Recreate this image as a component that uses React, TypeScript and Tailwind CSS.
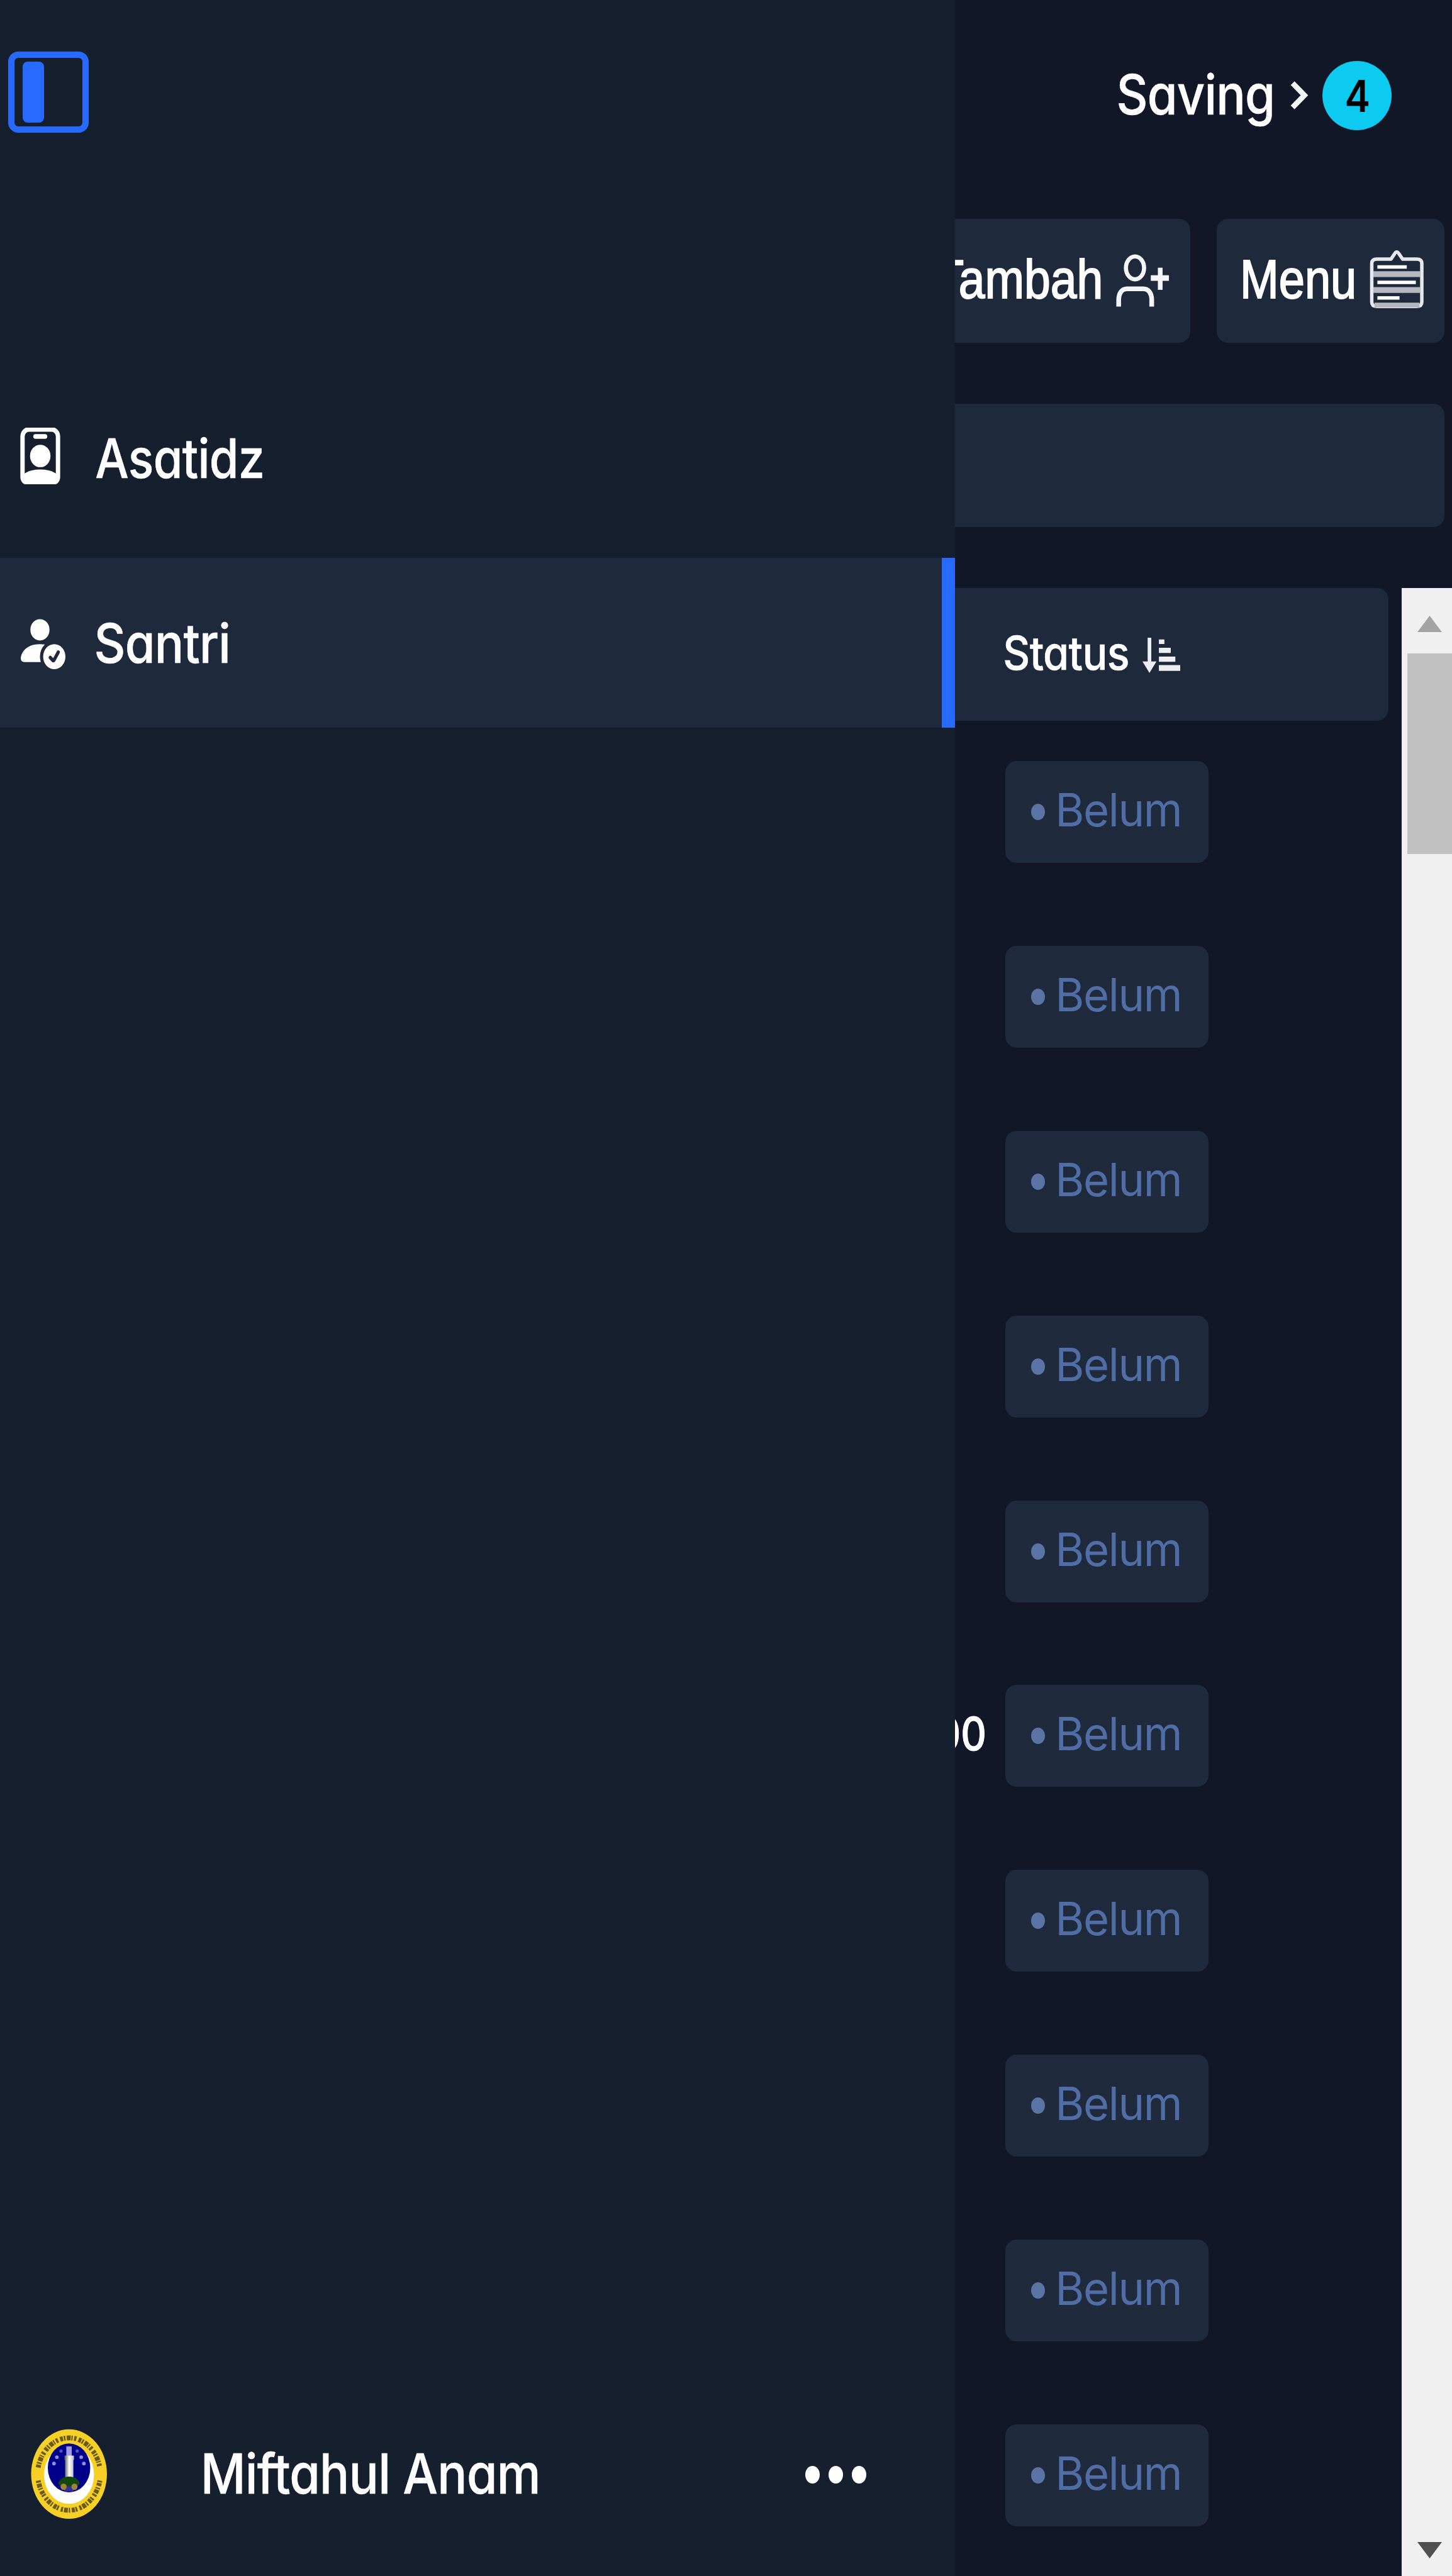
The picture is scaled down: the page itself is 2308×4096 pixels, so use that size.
import { useLayoutEffect, useRef, useState } from "react";
import type { ReactNode } from "react";
import { BsPersonBadge, BsPersonFillCheck } from "react-icons/bs";

type FitTextProps = { children: string; width: number; className?: string };

/* Condenses a single line of text so that its visible ink spans `width` pixels. */
function FitText({ children, width, className = "" }: FitTextProps) {
  const ref = useRef<HTMLSpanElement>(null);
  const [fit, setFit] = useState({ scale: 1, shift: 0 });

  useLayoutEffect(() => {
    const el = ref.current;
    const ctx = document.createElement("canvas").getContext("2d");
    if (!el || !ctx) return;
    const style = getComputedStyle(el);
    const tracking = parseFloat(style.letterSpacing) || 0;
    ctx.font = `${style.fontWeight} ${style.fontSize} ${style.fontFamily}`;
    const m = ctx.measureText(children);
    const left = -m.actualBoundingBoxLeft;
    const right = m.width - m.actualBoundingBoxRight;
    const scale = width / (el.offsetWidth - tracking - left - right);
    setFit({ scale, shift: -left * scale });
  }, [children, width]);

  return (
    <span className="block shrink-0" style={{ width }}>
      <span
        ref={ref}
        className={`inline-block origin-left whitespace-nowrap align-top leading-none ${className}`}
        style={{ transform: `translateX(${fit.shift}px) scaleX(${fit.scale})` }}
      >
        {children}
      </span>
    </span>
  );
}

function ToggleButton() {
  return (
    <button className="ml-[13px] mt-[82px] block h-[129px] w-[128px] rounded-[16px] border-[10.5px] border-[#286aff] pl-[13px]">
      <span className="block h-[97px] w-[34px] rounded-[8px] bg-[#286aff]" />
    </button>
  );
}

function NavItem({ icon, label, width, active }: { icon: ReactNode; label: string; width: number; active?: boolean }) {
  return (
    <a
      className={
        active
          ? "flex h-[269.5px] items-center border-r-[21px] border-[#286aff] bg-[#1e293b] pl-[23px]"
          : "flex h-[269.5px] items-center pl-[23px]"
      }
    >
      {icon}
      <FitText
        width={width}
        className="translate-y-px text-[87px] font-medium tracking-[-0.01em] [-webkit-text-stroke:0.5px_white]"
      >
        {label}
      </FitText>
    </a>
  );
}

function Emblem() {
  return (
    <svg className="h-[147px] w-[124px]" viewBox="165 125 430 510" preserveAspectRatio="none">
      <defs>
        <linearGradient id="tower" x1="0" x2="1" y1="0" y2="0">
          <stop offset="0" stopColor="#55555c" />
          <stop offset="0.5" stopColor="#ffffff" />
          <stop offset="1" stopColor="#b9b9c4" />
        </linearGradient>
      </defs>
      <ellipse cx="379" cy="378" rx="209" ry="247" fill="#f6cf27" />
      <path
        d="M209 342A174 208 0 0 1 549 342"
        fill="none"
        stroke="#6b5a16"
        strokeWidth="27"
        strokeDasharray="16 5 9 7 22 4 7 8 13 12"
      />
      <path
        d="M209 414A174 208 0 0 0 549 414"
        fill="none"
        stroke="#6b5a16"
        strokeWidth="27"
        strokeDasharray="12 6 21 5 8 9 17 4 10 13"
      />
      <ellipse cx="379" cy="382" rx="138" ry="160" fill="#ffffff" />
      <ellipse cx="379" cy="344" rx="117" ry="135" fill="#00008a" />
      <g fill="#8e8ede">
        <circle cx="296" cy="320" r="10" />
        <circle cx="312" cy="285" r="10" />
        <circle cx="335" cy="251" r="9" opacity="0.6" />
        <circle cx="424" cy="251" r="9" opacity="0.6" />
        <circle cx="446" cy="285" r="10" />
        <circle cx="461" cy="320" r="10" />
      </g>
      <rect x="364" y="225" width="30" height="55" fill="#9c9ce4" />
      <path d="M354 276h52v24h-3v105h-46V300h-3z" fill="url(#tower)" />
      <path d="M320 430c8-30 34-38 59-38s51 8 59 38c-8 16-30 22-59 22s-51-6-59-22z" fill="#12480f" />
      <rect x="352" y="446" width="54" height="28" fill="#33309a" />
      <ellipse cx="349" cy="448" rx="17" ry="18" fill="#9d8434" />
      <ellipse cx="409" cy="448" rx="17" ry="18" fill="#9d8434" />
    </svg>
  );
}

function Sidebar() {
  return (
    <aside className="absolute inset-y-0 left-0 flex w-[1518px] flex-col bg-[#151f2e]">
      <ToggleButton />
      <nav className="mt-[382px] flex flex-col gap-[24.5px]">
        <NavItem
          label="Asatidz"
          width={264}
          icon={<BsPersonBadge strokeWidth={0.35} stroke="white" preserveAspectRatio="none" className="-mt-[6px] mr-[48px] h-[90px] w-[82px]" />}
        />
        <NavItem
          label="Santri"
          width={209}
          active
          icon={<BsPersonFillCheck preserveAspectRatio="none" className="-mt-[7px] mr-[49px] h-[91px] w-[81px]" />}
        />
      </nav>
      <div className="mb-[88px] mt-auto flex items-center pl-[47.5px]">
        <Emblem />
        <div className="-mt-[3px] ml-[153px]">
          <FitText width={529} className="text-[88px] font-medium tracking-[-0.01em] [-webkit-text-stroke:0.5px_white]">
            Miftahul Anam
          </FitText>
        </div>
        <div className="ml-[426px] flex gap-[14px]">
          <i className="h-[28px] w-[23px] rounded-[50%] bg-white" />
          <i className="h-[28px] w-[23px] rounded-[50%] bg-white" />
          <i className="h-[28px] w-[23px] rounded-[50%] bg-white" />
        </div>
      </div>
    </aside>
  );
}

function PersonPlusIcon() {
  return (
    <svg className="h-[88px] w-[86.5px]" viewBox="85 130 300 305" preserveAspectRatio="none" fill="none" stroke="#f4f5f7">
      <ellipse cx="193" cy="213" rx="50" ry="63" strokeWidth="23" />
      <path d="M103 426v-36c0-38 18-62 46-62h90c28 0 46 24 46 62v36" strokeWidth="26" />
      <path d="M332 212v122" strokeWidth="26" />
      <path d="M280 269h100" strokeWidth="31" />
    </svg>
  );
}

function ClipboardIcon() {
  return (
    <svg className="h-[97px] w-[86.5px]" viewBox="165 105 300 335" preserveAspectRatio="none" fill="none">
      <path
        d="M205 167h78l18-26q13-26 28 0l18 26h78q28 0 28 24v212q0 24-28 24H205q-28 0-28-24V191q0-24 28-24z"
        stroke="#e6e8eb"
        strokeWidth="19"
        strokeLinejoin="round"
      />
      <path d="M186 250h260M186 337h260" stroke="#b5b8c0" strokeWidth="32" />
      <path d="M192 420h248" stroke="#b5b8c0" strokeWidth="27" />
      <path d="M208 210h162M208 295h212M208 380h122" stroke="#ffffff" strokeWidth="19" />
    </svg>
  );
}

function SortIcon() {
  return (
    <svg className="h-[58px] w-[61px]" viewBox="0 0 63 58" fill="#eceef1">
      <path d="M9.5 0h6v39h8.500L12.500 58 1 39h8.500z" />
      <path d="M28 3h9v7.500h-9zM28 16.500h19.500V25H28zM28 31h27v8.500H28zM28 45h35v9.500H28z" />
    </svg>
  );
}

function StatusPill() {
  return (
    <div className="flex h-[162px] w-[323.5px] items-center rounded-[18px] bg-[#202a3d] pl-[41.5px]">
      <i className="mr-[22px] h-[26px] w-[22px] rounded-[50%] bg-[#5b74a6]" />
      <div className="-mt-[7px]">
        <FitText width={192} className="text-[73px] font-normal tracking-[-0.02em] text-[#506ea5]">
          Belum
        </FitText>
      </div>
    </div>
  );
}

const rows = ["", "", "", "", "", "00", "", "", "", ""];

export default function App() {
  return (
    <div className="relative flex h-[4096px] w-[2308px] flex-col overflow-hidden bg-[#111726] font-['Inter',sans-serif] text-white [font-feature-settings:'cv11'_1]">
      <header className="flex h-[303px] shrink-0 items-center justify-end pr-[96px]">
        <div className="-mt-[3px]">
          <FitText width={244} className="text-[88px] font-medium tracking-[-0.01em] [-webkit-text-stroke:0.5px_white]">
            Saving
          </FitText>
        </div>
        <svg className="ml-[27px] h-[47px] w-[32px]" viewBox="0 0 34 49" fill="none" stroke="#f4f5f7" strokeWidth="9">
          <path d="M6 4l20 20.500L6 45" />
        </svg>
        <div className="ml-[21px] flex size-[110px] items-center justify-center rounded-full bg-[#0dcaf0]">
          <div className="mt-[2px] pl-[2px]">
            <FitText width={36} className="text-[70px] font-semibold text-black">
              4
            </FitText>
          </div>
        </div>
      </header>

      <div className="mt-[45px] flex shrink-0 justify-end gap-[41.5px] pr-[12px] font-['Liberation_Sans',sans-serif]">
        <button className="flex h-[197px] w-[445px] items-center justify-end rounded-[18px] bg-[#1e293b] pr-[33px]">
          <div className="-mt-[5px]">
            <FitText width={262} className="text-[88px] [-webkit-text-stroke:2px_white]">
              Tambah
            </FitText>
          </div>
          <span className="-mt-[2px] ml-[24px]">
            <PersonPlusIcon />
          </span>
        </button>
        <button className="flex h-[197px] w-[362.5px] items-center justify-end rounded-[18px] bg-[#1e293b] pr-[33px]">
          <div className="-mt-[5px]">
            <FitText width={175} className="text-[88px] [-webkit-text-stroke:2px_white]">
              Menu
            </FitText>
          </div>
          <span className="-mt-[8px] ml-[25px]">
            <ClipboardIcon />
          </span>
        </button>
      </div>

      <div className="ml-[12px] mr-[12px] mt-[97px] h-[196px] shrink-0 rounded-[18px] bg-[#1e293b]" />

      <div className="mt-[97px] flex min-h-0 flex-1">
        <section className="flex-1 overflow-hidden">
          <div className="mr-[21px] flex h-[211px] items-center rounded-[18px] bg-[#1e293b] pl-[1597px]">
            <div className="-mt-[6px]">
              <FitText width={196} className="text-[74px] font-medium tracking-[-0.01em] [-webkit-text-stroke:0.5px_white]">
                Status
              </FitText>
            </div>
            <span className="ml-[22px] mt-[3px]">
              <SortIcon />
            </span>
          </div>
          <div className="-mt-[2px]">
            {rows.map((amount, i) => (
              <div key={i} className="flex h-[293.9px] items-center">
                <div className="-mt-[7px] flex w-[1597.5px] justify-end pr-[33px]">
                  {amount && (
                    <FitText width={75} className="text-[73px] font-medium [-webkit-text-stroke:1px_white]">
                      {amount}
                    </FitText>
                  )}
                </div>
                <StatusPill />
              </div>
            ))}
          </div>
        </section>

        <div className="flex w-[80px] flex-col items-end bg-[#f0f0f0]">
          <svg className="mr-[16px] mt-[44px] h-[26px] w-[39px]" viewBox="0 0 39 26">
            <path d="M19.500 0L39 26H0z" fill="#a3a3a3" />
          </svg>
          <div className="mt-[33.5px] h-[319px] w-[71px] bg-[#c1c1c1]" />
          <svg className="mb-[28px] mr-[16px] mt-auto h-[26px] w-[39px]" viewBox="0 0 39 26">
            <path d="M0 0h39L19.500 26z" fill="#505050" />
          </svg>
        </div>
      </div>

      <Sidebar />
    </div>
  );
}
